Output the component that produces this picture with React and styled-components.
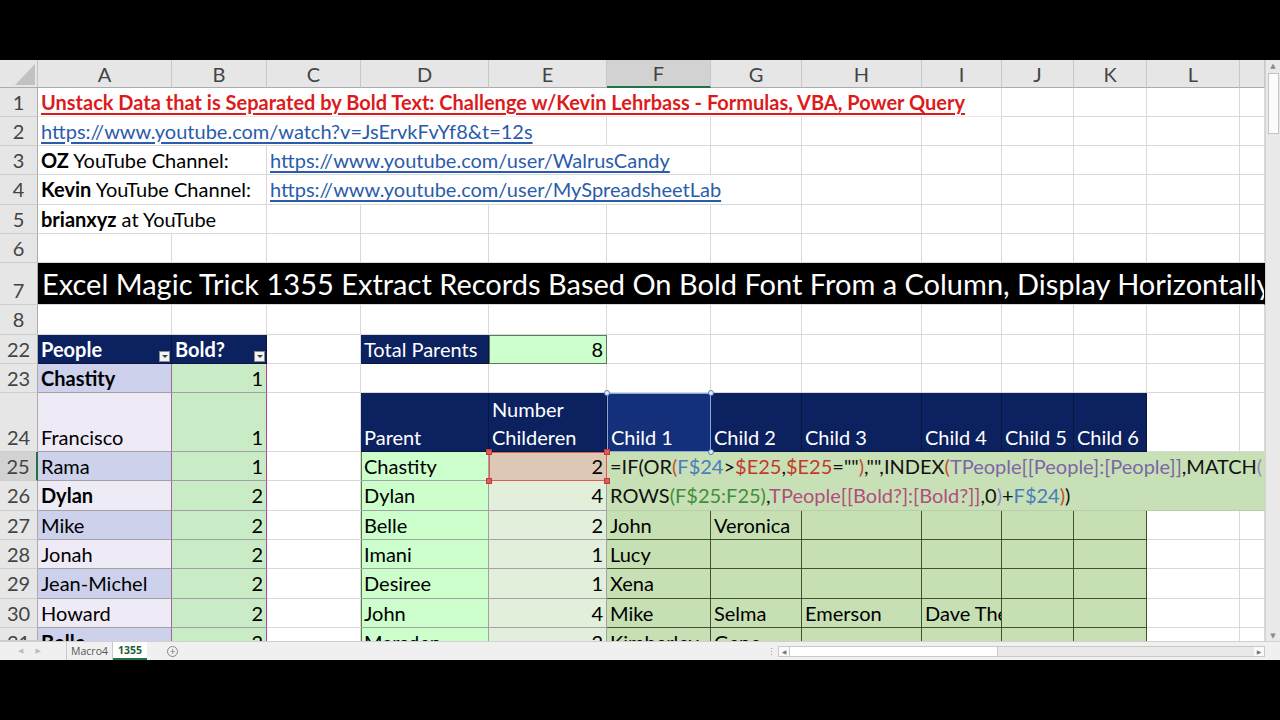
import React from 'react';
import styled, { createGlobalStyle, css } from 'styled-components';

const FONT = '"Lato", "Open Sans", "Liberation Sans", sans-serif';
const UI_FONT = '"Open Sans", "Liberation Sans", sans-serif';
const RH = 29.3;

const GlobalStyle = createGlobalStyle`
  html, body { margin: 0; padding: 0; background: #000; }
  #root { width: 1280px; height: 720px; }
`;

const COLS = ['A', 'B', 'C', 'D', 'E', 'F', 'G', 'H', 'I', 'J', 'K', 'L', 'M'];
const WIDTHS = [134, 95, 94, 128, 118, 104, 91, 120, 80, 72, 73, 93, 25];

const Screen = styled.div`
  width: 1280px;
  height: 720px;
  background: #000;
  display: flex;
  flex-direction: column;
`;
const Letterbox = styled.div`
  flex: none;
  height: ${({ $h }) => $h}px;
  background: #000;
`;
const Window = styled.div`
  flex: none;
  height: 600px;
  display: flex;
  flex-direction: column;
  background: #fff;
  font-family: ${FONT};
`;
const SheetArea = styled.div`
  height: 581px;
  display: flex;
`;
const Grid = styled.div`
  width: 1265px;
  height: 581px;
  overflow: hidden;
  display: grid;
  grid-template-columns: 38px ${WIDTHS.map((w) => `${w}px`).join(' ')};
  grid-template-rows: 27.5px repeat(6, ${RH}px) 42px repeat(3, ${RH}px) 59px repeat(6, ${RH}px) 13px;
  align-content: start;
  font-size: 20px;
  color: #000;
`;

const Corner = styled.div`
  grid-column: 1;
  grid-row: 1;
  background: #e6e6e6;
  border-right: 1px solid #c4c4c4;
  border-bottom: 1px solid #ababab;
  display: flex;
  align-items: flex-end;
  justify-content: flex-end;
  padding: 0 2px 2px 0;
`;
const ColHead = styled.div`
  grid-row: 1;
  grid-column: ${({ $col }) => $col};
  background: ${({ $active }) => ($active ? '#d2d2d2' : '#e6e6e6')};
  border-right: 1px solid #c8c8c8;
  border-bottom: ${({ $active }) => ($active ? '2px solid #217346' : '1px solid #ababab')};
  color: #444;
  display: flex;
  align-items: center;
  justify-content: center;
  line-height: 1;
  padding-top: 1px;
`;
const RowHead = styled.div`
  grid-column: 1;
  grid-row: ${({ $row }) => $row};
  background: ${({ $active }) => ($active ? '#d2d2d2' : '#e6e6e6')};
  border-right: ${({ $active }) => ($active ? '2px solid #217346' : '1px solid #ababab')};
  border-bottom: 1px solid #cdcdcd;
  color: #444;
  display: flex;
  align-items: ${({ $cut }) => ($cut ? 'flex-start' : 'flex-end')};
  justify-content: center;
  overflow: hidden;
  line-height: ${RH - 1}px;
`;

const KINDS = {
  plain: css``,
  title: css`
    color: #dc1c1c;
    font-weight: 700;
    text-decoration: underline;
    text-underline-offset: 3px;
    border-bottom-color: #eaeaea;
  `,
  link: css`
    color: #2b5cab;
    text-decoration: underline;
    text-underline-offset: 3px;
  `,
  banner: css`
    background: #000;
    color: #fff;
    font-size: 29px;
    line-height: 40px;
    padding-left: 4px;
    border-right-color: #000;
  `,
  navy: css`
    background: #0b2160;
    color: #fff;
    border-right-color: #0a163e;
    border-bottom-color: #0a163e;
  `,
  navySel: css`
    background: #15307a;
    color: #fff;
    border: 1px solid #8aa6dc;
    overflow: visible;
    z-index: 2;
  `,
  total: css`
    background: #ccffcc;
    border-right-color: #5b7b5b;
    border-bottom-color: #5b7b5b;
    box-shadow: inset 1px 1px 0 #5b7b5b;
  `,
  lavDark: css`
    background: #cdd1ec;
    border-right-color: #9c6c96;
    border-bottom-color: #a2a2a2;
  `,
  lavLight: css`
    background: #eeebf7;
    border-right-color: #9c6c96;
    border-bottom-color: #a2a2a2;
  `,
  flag: css`
    background: #c9ebc6;
    border-right-color: #b2479a;
    border-bottom-color: #a2a2a2;
  `,
  parent: css`
    background: #ccffcc;
    border-right-color: #a2a2a2;
    border-bottom-color: #a2a2a2;
    box-shadow: inset 1px 0 0 #5a7a4a;
  `,
  num: css`
    background: #e2efda;
    border-right-color: #a2a2a2;
    border-bottom-color: #a2a2a2;
  `,
  numRef: css`
    background: #dcc8b4;
    border: 1px solid #e05a5a;
    overflow: visible;
    z-index: 2;
  `,
  child: css`
    background: #c6e0b4;
    border-right-color: #3e5230;
    border-bottom-color: #3e5230;
  `,
  formula: css`
    background: #c8e0b6;
    border-right-color: #c8e0b6;
    border-bottom-color: #b8ceaa;
    flex-direction: column;
    justify-content: flex-start;
    align-items: flex-start;
    padding-left: 3px;
  `,
};

const Cell = styled.div`
  grid-column: ${({ $col }) => $col} / span ${({ $span }) => $span || 1};
  grid-row: ${({ $row }) => $row} / span ${({ $rows }) => $rows || 1};
  position: relative;
  min-width: 0;
  display: flex;
  align-items: ${({ $cut }) => ($cut ? 'flex-start' : 'flex-end')};
  justify-content: ${({ $right }) => ($right ? 'flex-end' : 'flex-start')};
  padding: 0 3px;
  white-space: ${({ $wrap }) => ($wrap ? 'normal' : 'nowrap')};
  overflow: hidden;
  line-height: ${({ $cut }) => ($cut ? '26px' : `${RH - 1}px`)};
  font-weight: ${({ $bold }) => ($bold ? 700 : 400)};
  background: #fff;
  border-right: 1px solid #d9d9d9;
  border-bottom: 1px solid #d9d9d9;
  ${({ $kind }) => KINDS[$kind || 'plain']}
  ${({ $cut }) => $cut && css`
    border-bottom: none;
    & > span.clip { display: block; height: 13px; overflow: hidden; line-height: 26px; }
  `}
`;
const Clip = styled.span`
  display: block;
  height: 13px;
  overflow: hidden;
  line-height: 28px;
`;

const FilterBtn = styled.span`
  position: absolute;
  right: 1px;
  bottom: 1px;
  width: 11px;
  height: 11px;
  box-sizing: border-box;
  background: #f3f3f3;
  border: 1px solid #8c8c8c;
  &::after {
    content: '';
    position: absolute;
    left: 2px;
    top: 3px;
    border-left: 3px solid transparent;
    border-right: 3px solid transparent;
    border-top: 3px solid #444;
  }
`;
const Handle = styled.span`
  position: absolute;
  width: 6px;
  height: 6px;
  box-sizing: border-box;
  border-radius: ${({ $square }) => ($square ? '0' : '50%')};
  background: ${({ $square }) => ($square ? '#e05a5a' : '#e4ecf8')};
  border: 1px solid ${({ $square }) => ($square ? '#c03a3a' : '#4f7cc4')};
  ${({ $v }) => ($v === 't' ? 'top: -4px;' : 'bottom: -4px;')}
  ${({ $h }) => ($h === 'l' ? 'left: -4px;' : 'right: -4px;')}
`;

const FormulaLine = styled.div`
  line-height: ${RH}px;
  white-space: nowrap;
`;
const TONES = {
  k: '#111',
  o: '#c4502e',
  b: '#4a7cc0',
  r: '#c2392b',
  p: '#7c66a6',
  v: '#9a86c8',
  g: '#3f8f3a',
  m: '#b24e7e',
};
const Tok = styled.span`
  color: ${({ $t }) => TONES[$t]};
`;

const FORMULA = [
  [['k', '=IF(OR'], ['o', '('], ['b', 'F$24'], ['k', '>'], ['r', '$E25'], ['k', ','], ['r', '$E25'], ['k', '=""'], ['o', ')'], ['k', ',"",INDEX'], ['o', '('], ['p', 'TPeople[[People]:[People]]'], ['k', ',MATCH'], ['v', '(']],
  [['k', 'ROWS'], ['g', '(F$25:F25)'], ['k', ','], ['m', 'TPeople[[Bold?]:[Bold?]]'], ['k', ',0'], ['v', ')'], ['k', '+'], ['b', 'F$24'], ['o', ')'], ['k', ')']],
];

const Scroll = styled.div`
  width: 15px;
  height: 581px;
  box-sizing: border-box;
  background: #e9e9e9;
  border-left: 1px solid #d4d4d4;
  display: flex;
  flex-direction: column;
  align-items: center;
  padding-top: 2px;
`;
const ArrowBox = styled.div`
  width: 11px;
  height: 9px;
  display: flex;
  align-items: center;
  justify-content: center;
  color: #8a8a8a;
  font-size: 7px;
  line-height: 1;
  font-family: "DejaVu Sans", sans-serif;
`;
const VThumb = styled.div`
  width: 11px;
  height: 61px;
  margin-top: 2px;
  box-sizing: border-box;
  background: #fcfcfc;
  border: 1px solid #c4c4c4;
`;
const Spacer = styled.div`
  flex: 1;
`;

const TabBar = styled.div`
  height: 19px;
  box-sizing: border-box;
  display: flex;
  align-items: stretch;
  background: #f0f0f0;
  border-top: 1px solid #d0d0d0;
  font-family: ${UI_FONT};
  font-size: 10.5px;
  color: #555;
`;
const NavArrows = styled.div`
  width: 67px;
  display: flex;
  align-items: center;
  gap: 12px;
  padding-left: 18px;
  box-sizing: border-box;
  color: #bdbdbd;
  font-size: 7px;
  font-family: "DejaVu Sans", sans-serif;
  border-right: 1px solid #c8c8c8;
`;
const Tab = styled.div`
  display: flex;
  align-items: center;
  justify-content: center;
  width: ${({ $w }) => $w}px;
  box-sizing: border-box;
  ${({ $active }) =>
    $active
      ? css`
          background: #fff;
          color: #1d5e38;
          font-weight: 700;
          border-bottom: 2px solid #217346;
        `
      : css`
          border-right: 1px solid #c8c8c8;
        `}
`;
const AddSheet = styled.div`
  margin-left: 20px;
  width: 11px;
  height: 11px;
  align-self: center;
  box-sizing: border-box;
  border: 1px solid #8a8a8a;
  border-radius: 50%;
  color: #777;
  font-size: 10px;
  line-height: 8px;
  text-align: center;
`;
const HScroll = styled.div`
  width: 501px;
  display: flex;
  align-items: center;
`;
const Dots = styled.div`
  width: 14px;
  text-align: center;
  color: #999;
  font-size: 9px;
`;
const HTrack = styled.div`
  flex: 1;
  height: 11px;
  display: flex;
  align-items: stretch;
  background: #e9e9e9;
  border: 1px solid #c8c8c8;
  box-sizing: border-box;
`;
const HArrow = styled.div`
  width: 10px;
  display: flex;
  align-items: center;
  justify-content: center;
  color: #777;
  font-size: 6px;
  font-family: "DejaVu Sans", sans-serif;
  background: #fafafa;
`;
const HThumb = styled.div`
  width: 207px;
  background: #fff;
  border-right: 1px solid #c8c8c8;
  border-left: 1px solid #c8c8c8;
`;
const CornerBox = styled.div`
  width: 15px;
  background: #f0f0f0;
`;

const names = (kind, arr) => arr.map((t, i) => ({ c: COLS[5 + i], kind, text: t }));

const ROWS = [
  { n: 1, cells: [{ c: 'A', span: 9, kind: 'title', text: 'Unstack Data that is Separated by Bold Text: Challenge w/Kevin Lehrbass - Formulas, VBA, Power Query' }] },
  { n: 2, cells: [{ c: 'A', span: 5, kind: 'link', text: 'https://www.youtube.com/watch?v=JsErvkFvYf8&t=12s' }] },
  {
    n: 3,
    cells: [
      { c: 'A', span: 2, text: <><b>OZ</b>&nbsp;YouTube Channel:</> },
      { c: 'C', span: 4, kind: 'link', text: 'https://www.youtube.com/user/WalrusCandy' },
    ],
  },
  {
    n: 4,
    cells: [
      { c: 'A', span: 2, text: <><b>Kevin</b>&nbsp;YouTube Channel:</> },
      { c: 'C', span: 5, kind: 'link', text: 'https://www.youtube.com/user/MySpreadsheetLab' },
    ],
  },
  { n: 5, cells: [{ c: 'A', span: 2, text: <><b>brianxyz</b>&nbsp;at YouTube</> }] },
  { n: 6, cells: [] },
  { n: 7, cells: [{ c: 'A', span: 13, kind: 'banner', text: 'Excel Magic Trick 1355 Extract Records Based On Bold Font From a Column, Display Horizontally' }] },
  { n: 8, cells: [] },
  {
    n: 22,
    cells: [
      { c: 'A', kind: 'navy', bold: true, filter: true, text: 'People' },
      { c: 'B', kind: 'navy', bold: true, filter: true, text: 'Bold?' },
      { c: 'D', kind: 'navy', text: 'Total Parents' },
      { c: 'E', kind: 'total', right: true, text: '8' },
    ],
  },
  {
    n: 23,
    cells: [
      { c: 'A', kind: 'lavDark', bold: true, text: 'Chastity' },
      { c: 'B', kind: 'flag', right: true, text: '1' },
    ],
  },
  {
    n: 24,
    cells: [
      { c: 'A', kind: 'lavLight', text: 'Francisco' },
      { c: 'B', kind: 'flag', right: true, text: '1' },
      { c: 'D', kind: 'navy', text: 'Parent' },
      { c: 'E', kind: 'navy', wrap: true, text: 'Number Childeren' },
      { c: 'F', kind: 'navySel', text: 'Child 1', handles: 'round' },
      ...['Child 2', 'Child 3', 'Child 4', 'Child 5', 'Child 6'].map((t, i) => ({ c: COLS[6 + i], kind: 'navy', text: t })),
    ],
  },
  {
    n: 25,
    active: true,
    cells: [
      { c: 'A', kind: 'lavDark', text: 'Rama' },
      { c: 'B', kind: 'flag', right: true, text: '1' },
      { c: 'D', kind: 'parent', text: 'Chastity' },
      { c: 'E', kind: 'numRef', right: true, text: '2', handles: 'square' },
      { c: 'F', span: 8, rows: 2, kind: 'formula', formula: true },
    ],
  },
  {
    n: 26,
    skip: ['F', 'G', 'H', 'I', 'J', 'K', 'L', 'M'],
    cells: [
      { c: 'A', kind: 'lavLight', bold: true, text: 'Dylan' },
      { c: 'B', kind: 'flag', right: true, text: '2' },
      { c: 'D', kind: 'parent', text: 'Dylan' },
      { c: 'E', kind: 'num', right: true, text: '4' },
    ],
  },
  {
    n: 27,
    cells: [
      { c: 'A', kind: 'lavDark', text: 'Mike' },
      { c: 'B', kind: 'flag', right: true, text: '2' },
      { c: 'D', kind: 'parent', text: 'Belle' },
      { c: 'E', kind: 'num', right: true, text: '2' },
      ...names('child', ['John', 'Veronica', '', '', '', '']),
    ],
  },
  {
    n: 28,
    cells: [
      { c: 'A', kind: 'lavLight', text: 'Jonah' },
      { c: 'B', kind: 'flag', right: true, text: '2' },
      { c: 'D', kind: 'parent', text: 'Imani' },
      { c: 'E', kind: 'num', right: true, text: '1' },
      ...names('child', ['Lucy', '', '', '', '', '']),
    ],
  },
  {
    n: 29,
    cells: [
      { c: 'A', kind: 'lavDark', text: 'Jean-Michel' },
      { c: 'B', kind: 'flag', right: true, text: '2' },
      { c: 'D', kind: 'parent', text: 'Desiree' },
      { c: 'E', kind: 'num', right: true, text: '1' },
      ...names('child', ['Xena', '', '', '', '', '']),
    ],
  },
  {
    n: 30,
    cells: [
      { c: 'A', kind: 'lavLight', text: 'Howard' },
      { c: 'B', kind: 'flag', right: true, text: '2' },
      { c: 'D', kind: 'parent', text: 'John' },
      { c: 'E', kind: 'num', right: true, text: '4' },
      ...names('child', ['Mike', 'Selma', 'Emerson', 'Dave Thelen', '', '']),
    ],
  },
  {
    n: 31,
    cut: true,
    cells: [
      { c: 'A', kind: 'lavDark', bold: true, text: 'Belle' },
      { c: 'B', kind: 'flag', right: true, text: '2' },
      { c: 'D', kind: 'parent', text: 'Marsden' },
      { c: 'E', kind: 'num', right: true, text: '2' },
      ...names('child', ['Kimberley', 'Gene', '', '', '', '']),
    ],
  },
];

function Handles({ square }) {
  return (
    <>
      <Handle $v="t" $h="l" $square={square} />
      <Handle $v="t" $h="r" $square={square} />
      <Handle $v="b" $h="l" $square={square} />
      <Handle $v="b" $h="r" $square={square} />
    </>
  );
}

function DataCell({ spec, col, row, cut }) {
  let body = spec.text;
  if (spec.formula) {
    body = FORMULA.map((line, li) => (
      <FormulaLine key={li}>
        {line.map(([t, s], ti) => <Tok key={ti} $t={t}>{s}</Tok>)}
      </FormulaLine>
    ));
  } else if (cut && spec.text) {
    body = <Clip>{spec.text}</Clip>;
  }
  return (
    <Cell
      $col={col}
      $row={row}
      $span={spec.span}
      $rows={spec.rows}
      $kind={spec.kind}
      $bold={spec.bold}
      $right={spec.right}
      $wrap={spec.wrap}
      $cut={cut}
    >
      {body}
      {spec.filter && <FilterBtn />}
      {spec.handles && <Handles square={spec.handles === 'square'} />}
    </Cell>
  );
}

function SheetRows() {
  const out = [];
  ROWS.forEach((r, i) => {
    const gridRow = i + 2;
    out.push(
      <RowHead key={`h${r.n}`} $row={gridRow} $active={r.active} $cut={r.cut}>
        {r.cut ? <Clip>{r.n}</Clip> : r.n}
      </RowHead>,
    );
    let ci = 0;
    while (ci < COLS.length) {
      const col = COLS[ci];
      if (r.skip && r.skip.includes(col)) {
        ci += 1;
        continue;
      }
      const spec = r.cells.find((c) => c.c === col);
      if (spec) {
        out.push(<DataCell key={`${r.n}${col}`} spec={spec} col={ci + 2} row={gridRow} cut={r.cut} />);
        ci += spec.span || 1;
      } else {
        out.push(<Cell key={`${r.n}${col}`} $col={ci + 2} $row={gridRow} $cut={r.cut} />);
        ci += 1;
      }
    }
  });
  return out;
}

export default function App() {
  return (
    <Screen>
      <GlobalStyle />
      <Letterbox $h={60} />
      <Window>
        <SheetArea>
          <Grid>
            <Corner>
              <svg width="20" height="21" viewBox="0 0 20 21">
                <polygon points="20,0 20,21 0,21" fill="#c2c2c2" />
              </svg>
            </Corner>
            {COLS.map((c, i) => (
              <ColHead key={c} $col={i + 2} $active={c === 'F'}>{c === 'M' ? '' : c}</ColHead>
            ))}
            <SheetRows />
          </Grid>
          <Scroll>
            <ArrowBox>▲</ArrowBox>
            <VThumb />
            <Spacer />
            <ArrowBox>▼</ArrowBox>
          </Scroll>
        </SheetArea>
        <TabBar>
          <NavArrows>
            <span>◀</span>
            <span>▶</span>
          </NavArrows>
          <Tab $w={46}>Macro4</Tab>
          <Tab $w={34} $active>1355</Tab>
          <AddSheet>+</AddSheet>
          <Spacer />
          <HScroll>
            <Dots>⋮</Dots>
            <HTrack>
              <HArrow>◀</HArrow>
              <HThumb />
              <Spacer />
              <HArrow>▶</HArrow>
            </HTrack>
          </HScroll>
          <CornerBox />
        </TabBar>
      </Window>
      <Letterbox $h={60} />
    </Screen>
  );
}
